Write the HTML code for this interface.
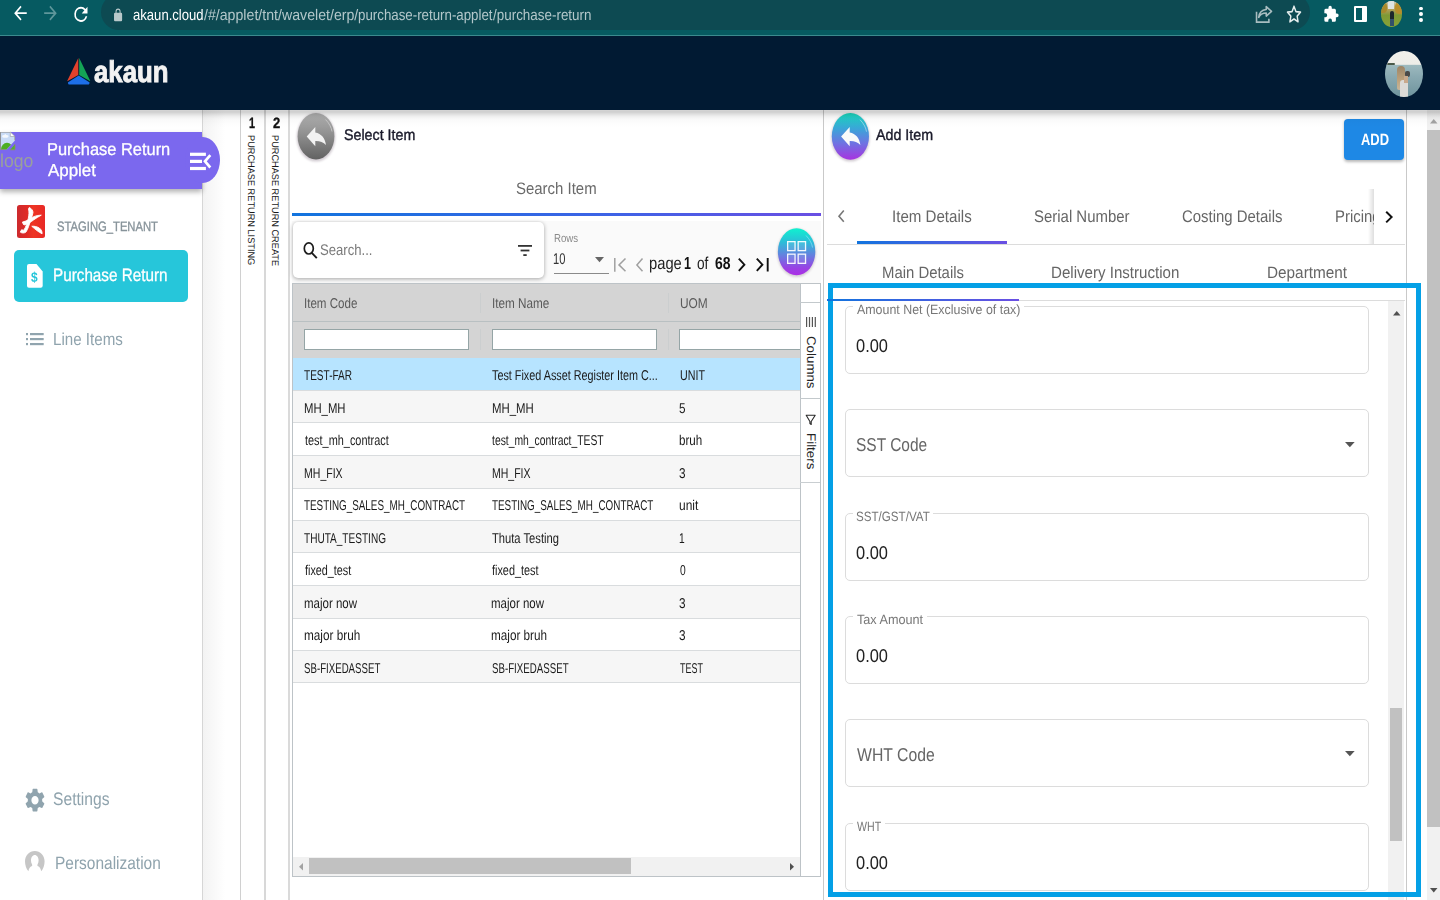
<!DOCTYPE html>
<html lang="en"><head><meta charset="utf-8"><title>Purchase Return Applet</title>
<style>
*{box-sizing:border-box;margin:0;padding:0}
html,body{width:1440px;height:900px;overflow:hidden;background:#fff;font-family:"Liberation Sans",sans-serif}
.a{position:absolute}
.t{position:absolute;white-space:pre;text-rendering:geometricPrecision;transform-origin:0 50%;font-family:"Liberation Sans",sans-serif}
.lbl{background:#fff}
svg{position:absolute;overflow:visible}
/* browser */
#chrome{left:0;top:0;width:1440px;height:36px;background:#065a61;border-bottom:1px solid #3b8a8e}
#pill{left:101px;top:-6px;width:1209px;height:35.800px;border-radius:18px;background:#0d4a52}
/* header */
#hdr{left:0;top:36px;width:1440px;height:74px;background:#011a33}
#hsh{left:0;top:110px;width:1440px;height:18px;background:linear-gradient(180deg,rgba(0,0,0,.17) 0,rgba(0,0,0,.19) 11%,rgba(0,0,0,.13) 22%,rgba(0,0,0,.075) 33%,rgba(0,0,0,.04) 44%,rgba(0,0,0,.02) 56%,rgba(0,0,0,.008) 78%,rgba(0,0,0,0) 100%)}
/* sidebar */
#side{left:0;top:110px;width:203px;height:790px;background:#fff;border-right:1px solid #d6d6d6}
#sideshadow{left:203px;top:110px;width:37px;height:790px;background:linear-gradient(90deg,#f3f3f3,#fff 60%)}
#banner{left:0;top:132px;width:201.800px;height:57px;background:#7b68ee;box-shadow:0 3px 5px rgba(0,0,0,.3)}
#bump{left:185px;top:136.700px;width:35px;height:46.600px;border-radius:50%;background:#7b68ee}
#redicon{left:16.600px;top:204.800px;width:28.400px;height:32.900px;border-radius:2.500px;background:linear-gradient(90deg,#cc2a2e,#e02a26 35%,#ee3524 58%,#e82826)}
#pbtn{left:14px;top:250px;width:174px;height:51.5px;border-radius:5px;background:#26c6da}
.vline{width:1px;top:110px;height:790px;background:#c9c9c9}
.vt{position:absolute;white-space:pre;text-rendering:geometricPrecision;font-size:9.6px;line-height:10px;color:#1a1a1a;transform-origin:0 0;letter-spacing:0}
/* left panel */
#blueline{left:292px;top:213px;width:528.5px;height:3px;background:linear-gradient(90deg,#1274de,#3d63e6 60%,#6a4fe3)}
#tool{left:292px;top:221px;width:529px;height:62px;background:#fafafa}
#sbox{left:292.800px;top:221.600px;width:251.600px;height:56.400px;border-radius:5px;background:#fff;box-shadow:0 1px 4px rgba(0,0,0,.35)}
#grid{left:292.4px;top:283px;width:528.3px;height:594px;border:1px solid #bdc3c7;background:#fff}
#ghead{left:293.4px;top:284px;width:506.600px;height:74.200px;background:#d4d4d4}
.hl{position:absolute;left:293.4px;width:506.600px;height:1px;background:#d9dcde}
.row{position:absolute;left:293.4px;width:506.600px;height:32.5px}
.fi{position:absolute;top:329px;height:20.6px;background:#fff;border:1px solid #95a5a6}
.csep{position:absolute;width:1px;background:#cbcecf}
#gside{left:800px;top:284px;width:19.700px;height:592px;background:#fff;border-left:1px solid #bdc3c7}
.ell{position:absolute;border-radius:50%}
/* right */
.box{position:absolute;left:845px;width:524.3px;height:68px;border:1px solid #dcdcdc;border-radius:5px;background:#fff}
#hi{left:828px;top:283px;width:593.3px;height:614px;border:5px solid #04a0e6}
</style></head><body>

<!-- ===== browser chrome ===== -->
<div id="chrome" class="a"></div>
<div id="pill" class="a"></div>
<svg style="left:11.250px;top:2.270px" width="18.900" height="22.350" viewBox="0 0 24 24" preserveAspectRatio="none"><path d="M20 11H7.83l5.59-5.59L12 4l-8 8 8 8 1.41-1.41L7.83 13H20v-2z" fill="#fff"/></svg>
<svg style="left:41.350px;top:2.270px" width="18.900" height="22.350" viewBox="0 0 24 24" preserveAspectRatio="none"><path d="M4 11h12.17l-5.59-5.59L12 4l8 8-8 8-1.41-1.41L16.17 13H4v-2z" fill="#5f979b"/></svg>
<svg style="left:71px;top:2.500px" width="19.800" height="22.650" viewBox="0 0 24 24" preserveAspectRatio="none"><path d="M17.65 6.35A7.95 7.95 0 0 0 12 4a8 8 0 1 0 7.73 10h-2.08A6 6 0 1 1 12 6c1.66 0 3.14.69 4.22 1.78L13 11h7V4l-2.35 2.35z" fill="#fff"/></svg>
<svg style="left:112.200px;top:7.700px" width="12.150" height="14.400" viewBox="0 0 24 24" preserveAspectRatio="none"><path d="M18 8h-1V6A5 5 0 0 0 7 6v2H6a2 2 0 0 0-2 2v10a2 2 0 0 0 2 2h12a2 2 0 0 0 2-2V10a2 2 0 0 0-2-2zM9 6a3 3 0 0 1 6 0v2H9V6z" fill="#b9c9cb"/></svg>
<!-- share -->
<svg style="left:1252.500px;top:4.400px" width="21.200" height="20.700" viewBox="0 0 24 24" preserveAspectRatio="none" fill="none" stroke="#a9bdc0" stroke-width="1.8"><path d="M4 9v12h14v-4"/><path d="M15 3l6 5.5-6 5.5v-3.5c-4 0-7 1.500-8.500 5 .5-5 3.500-8.500 8.500-9z" stroke-linejoin="round"/></svg>
<!-- star -->
<svg style="left:1284.600px;top:3.200px" width="18" height="22.500" viewBox="0 0 24 24" preserveAspectRatio="none" fill="none" stroke="#e6eeee" stroke-width="1.9" stroke-linejoin="round"><path d="M12 3.500l2.600 5.600 6.100.700-4.500 4.200 1.200 6-5.400-3-5.400 3 1.200-6-4.500-4.200 6.100-.700z"/></svg>
<!-- puzzle -->
<svg style="left:1322.800px;top:5.200px" width="16.300" height="18.300" viewBox="0 0 24 24" preserveAspectRatio="none"><path d="M20.500 11H19V7a2 2 0 0 0-2-2h-4V3.500a2.500 2.500 0 0 0-5 0V5H4a2 2 0 0 0-2 2v3.800h1.500a2.700 2.700 0 0 1 0 5.400H2V20a2 2 0 0 0 2 2h3.800v-1.500a2.700 2.700 0 0 1 5.400 0V22H17a2 2 0 0 0 2-2v-4h1.500a2.500 2.500 0 0 0 0-5z" fill="#fff"/></svg>
<!-- side panel -->
<div class="a" style="left:1353.7px;top:5.500px;width:13.8px;height:16.5px;border:2.2px solid #fff;border-right-width:5.500px;border-radius:1px"></div>
<!-- avatar small -->
<div class="ell" style="left:1380.8px;top:1px;width:21px;height:26px;background:linear-gradient(180deg,#c9c9b8 0%,#b9a25a 30%,#9a9a48 44%,#7f9a34 55%,#86a238 100%);overflow:hidden">
<div class="a" style="left:-2px;top:1px;width:8.500px;height:11px;background:#a88a2c;border-radius:40%"></div>
<div class="a" style="left:14px;top:1px;width:9px;height:12px;background:#b88e2a;border-radius:40%"></div>
<div class="a" style="left:7px;top:0;width:6.500px;height:8px;background:#dfe3e2"></div>
<div class="a" style="left:9px;top:9.500px;width:4.600px;height:8.500px;background:#1d262b;border-radius:2px 2px 0 0"></div>
<div class="a" style="left:9.600px;top:18px;width:3.400px;height:7px;background:#33506a"></div>
</div>
<div class="ell" style="left:1419px;top:6.5px;width:3.6px;height:3.8px;background:#fff"></div>
<div class="ell" style="left:1419px;top:12.2px;width:3.6px;height:3.8px;background:#fff"></div>
<div class="ell" style="left:1419px;top:17.9px;width:3.6px;height:3.8px;background:#fff"></div>

<!-- ===== sidebar ===== -->
<div id="side" class="a"></div>
<div id="sideshadow" class="a"></div>
<div class="vline a" style="left:240px;background:#d0d0d0"></div>
<div class="vline a" style="left:264px;width:2px;background:#d8d8d8"></div>
<div class="vline a" style="left:288px;width:2px;background:#dadada"></div>
<div class="vline a" style="left:823px"></div>
<div class="vline a" style="left:1406px"></div>
<div id="banner" class="a"></div>
<div id="bump" class="a"></div>
<!-- broken img icon -->
<svg style="left:0;top:132.200px" width="15" height="17.800" viewBox="0 0 15 17.800"><defs><clipPath id="bk"><path d="M0 0h10.300L15 4.500v4L6.200 17.800H0z"/></clipPath></defs><g clip-path="url(#bk)"><rect width="15" height="17.800" fill="#c8dbf6"/><ellipse cx="5.300" cy="4.300" rx="3.200" ry="1.500" fill="#f4f8fd"/><path d="M3.600 3.600l1.700-1.700 1.700 1.700z" fill="#f4f8fd"/><ellipse cx="7" cy="17.500" rx="6" ry="6.700" fill="#4cae22"/><path d="M0 0v17.800" stroke="#8a8a8a" stroke-width="1.800"/><path d="M0 17.500h7" stroke="#8a8a8a" stroke-width="1"/><path d="M0 .3h10" stroke="#9a9a9a" stroke-width=".8"/></g><path d="M10.300 0v4.500H15z" fill="#fdfdfd" stroke="#9a9a9a" stroke-width=".6"/><path d="M10.200 17.800L15 12.200v5.600z" fill="#55b030"/><path d="M15 12.200v5.600h-4.800" fill="none" stroke="#8f8f6a" stroke-width=".8"/><path d="M14.700 4.500v4" stroke="#9a9a80" stroke-width=".7"/></svg>
<!-- collapse icon -->
<svg style="left:188px;top:150px" width="26" height="22" viewBox="188 150 26 22"><rect x="190" y="152.700" width="15.900" height="3.200" fill="#fff"/><rect x="190" y="159.800" width="12" height="3.200" fill="#fff"/><rect x="190" y="166.900" width="15.900" height="3.200" fill="#fff"/><path d="M210.300 155.200l-5.300 6.150 5.300 6.150" fill="none" stroke="#fff" stroke-width="2.700"/></svg>
<div id="redicon" class="a"></div>
<svg style="left:16.600px;top:204.800px" width="28.400" height="32.900" viewBox="0 0 28.400 32.900" fill="#fff" stroke="#fff" stroke-width=".9" stroke-linejoin="round"><path d="M12.300 2.500C14.500 3.500 16 5.500 16 7.500 15.600 10 14.800 12 14 14 12.500 19 11 24 9 27 7.500 28.300 5 28.300 3.400 27.200 3.600 26 4.200 25 5 24.600 5.600 25.300 6.200 25.500 6.800 25.200 9 22 10.500 17 11.300 13.500 12 10 12.300 6.500 11.500 4z"/><path d="M5.400 17.100C8 16.500 10 15.600 12 14.500 15 12.500 18 10.300 24.300 10.200 22 11.500 19 13 16.500 15 14 17 11 18.800 7 20 6.300 19.300 5.600 18 5.400 17.100z"/><path d="M14.800 21.300C17 21 20 21.500 22.500 23.200 24.500 24.800 25.300 27 25.100 28.800 23.500 28 22 27 20.500 26 18.500 24.500 16.500 22.800 14.800 21.300z"/></svg>
<div id="pbtn" class="a"></div>
<!-- doc $ icon -->
<svg style="left:27px;top:263.7px" width="15.7" height="23.8" viewBox="0 0 15.7 23.8"><path d="M2 0h7.500l6.200 7.500V21.800a2 2 0 0 1-2 2H2a2 2 0 0 1-2-2V2a2 2 0 0 1 2-2z" fill="#fff"/></svg>
<div class="t" style="left:31.100px;top:268.5px;font-size:14px;line-height:16px;font-weight:700;color:#26c6da;transform:scaleX(.85)">$</div>
<!-- list icon -->
<svg style="left:26px;top:332.5px" width="17.7" height="12.2" viewBox="0 0 17.7 12.2" fill="#90a4ae"><rect x="0" y="0" width="2" height="2.200"/><rect x="0" y="5" width="2" height="2.200"/><rect x="0" y="10" width="2" height="2.200"/><rect x="4" y="0" width="13.7" height="2.200"/><rect x="4" y="5" width="13.7" height="2.200"/><rect x="4" y="10" width="13.7" height="2.200"/></svg>
<!-- gear -->
<svg style="left:22.700px;top:785.700px" width="24" height="28.400" viewBox="0 0 24 24" preserveAspectRatio="none"><path d="M19.140 12.940c.040-.300.060-.610.060-.940 0-.320-.020-.640-.070-.940l2.030-1.580a.490.490 0 0 0 .12-.610l-1.920-3.320a.488.488 0 0 0-.59-.220l-2.390.960c-.500-.380-1.030-.700-1.620-.940l-.360-2.540a.484.484 0 0 0-.480-.410h-3.840c-.240 0-.430.170-.470.410l-.360 2.540c-.590.240-1.130.570-1.620.940l-2.390-.960c-.220-.080-.470 0-.590.220L2.740 8.870c-.120.210-.080.470.12.610l2.030 1.580c-.050.300-.090.630-.090.940s.020.640.070.940l-2.030 1.580a.490.490 0 0 0-.12.610l1.920 3.320c.120.220.370.290.590.220l2.390-.960c.500.380 1.030.700 1.620.940l.360 2.540c.050.240.240.410.480.410h3.840c.240 0 .440-.170.470-.410l.360-2.540c.590-.240 1.130-.560 1.620-.940l2.390.960c.220.080.470 0 .590-.220l1.920-3.320c.120-.220.070-.470-.120-.610l-2.010-1.580zM12 15.600c-1.980 0-3.600-1.620-3.600-3.600s1.620-3.600 3.600-3.600 3.600 1.620 3.600 3.600-1.620 3.600-3.600 3.600z" fill="#90a4ae"/></svg>
<!-- person -->
<svg style="left:24.800px;top:850.800px" width="19.600" height="20.500" viewBox="0 0 19.600 20.500"><path d="M9.800 0C15.200 0 19.600 4.600 19.600 10.300 19.600 14.200 18.400 17.700 16.200 20.300 15.800 17.500 14.800 15.800 12.600 15 12.200 14.500 12.300 13.800 12.600 13.200 13.300 12 13.600 10.800 13.600 9.500 13.600 6.300 11.900 4 9.800 4 7.700 4 6 6.300 6 9.500 6 10.800 6.300 12 7 13.200 7.300 13.800 7.400 14.500 7 15 4.800 15.800 3.800 17.500 3.400 20.300 1.200 17.700 0 14.200 0 10.300 0 4.600 4.400 0 9.800 0z" fill="#c6c6c6"/></svg>

<!-- vertical strip labels -->
<div class="vt" style="left:255.200px;top:135.400px;transform:rotate(90deg) scaleX(.958)" id="v1">PURCHASE RETURN LISTING</div>
<div class="vt" style="left:279.200px;top:135.400px;transform:rotate(90deg) scaleX(.958)" id="v2">PURCHASE RETURN CREATE</div>

<!-- ===== left panel ===== -->
<svg style="left:290px;top:108px" width="52" height="60" viewBox="290 108 52 60"><defs><linearGradient id="gg" x1="0" y1="0" x2="0" y2="1"><stop offset="0" stop-color="#b2b2b2"/><stop offset=".45" stop-color="#909090"/><stop offset="1" stop-color="#626262"/></linearGradient><filter id="bl"><feGaussianBlur stdDeviation="1.300"/></filter></defs>
<ellipse cx="316" cy="137.300" rx="19.300" ry="24.200" fill="#8a7a8a" opacity=".38" filter="url(#bl)"/>
<ellipse cx="316" cy="136.200" rx="18.400" ry="23.200" fill="url(#gg)"/>
<path d="M325.500 119.500c4 4 6 8.500 6.500 12" fill="none" stroke="#d9d9d9" stroke-width=".8" opacity=".8"/>
<path d="M315.300 127L306.700 136.400l8.600 9.900v-5.200c4.600-.1 8.100 1 10.700 4-1-7-4.500-11.500-10.700-12.600z" fill="#f2f2f2"/></svg>
<div id="blueline" class="a"></div>
<div id="tool" class="a"></div>
<div id="sbox" class="a"></div>
<!-- search icon -->
<svg style="left:302px;top:240px" width="18" height="20" viewBox="302 240 18 20" fill="none" stroke="#1c1c1c" stroke-width="1.700"><ellipse cx="308.800" cy="248.400" rx="4.500" ry="5.600"/><path d="M311.800 252.800l5 5.400" stroke-width="1.900"/></svg>
<!-- filter icon -->
<svg style="left:517.600px;top:245px" width="14" height="12" viewBox="0 0 14 12" fill="#333"><rect x="0" y="0" width="14" height="1.800"/><rect x="2.600" y="4.600" width="8.800" height="1.800"/><rect x="5.300" y="9.200" width="3.400" height="1.800"/></svg>
<!-- rows select -->
<div class="a" style="left:554px;top:273.300px;width:55px;height:1px;background:#8a8a8a"></div>
<svg style="left:595.400px;top:257px" width="9" height="5.200" viewBox="0 0 9 5.200"><path d="M0 0h9L4.500 5.200z" fill="#666"/></svg>
<!-- pager icons -->
<svg style="left:613.500px;top:257.600px" width="12.200" height="13.800" viewBox="0 0 12.200 13.800" fill="none" stroke="#a0a0a0" stroke-width="1.500"><path d="M.8 0v13.800M11.500.5L5 6.900l6.500 6.400"/></svg>
<svg style="left:636.300px;top:257.600px" width="7" height="13.800" viewBox="0 0 7 13.800" fill="none" stroke="#a0a0a0" stroke-width="1.500"><path d="M6.500.5L.9 6.900l5.600 6.400"/></svg>
<svg style="left:738.300px;top:258px" width="7.500" height="13.400" viewBox="0 0 7.500 13.400" fill="none" stroke="#111" stroke-width="1.900"><path d="M.8.600l5.600 6.100-5.600 6.100"/></svg>
<svg style="left:755.900px;top:258px" width="12.700" height="13.400" viewBox="0 0 12.700 13.400" fill="none" stroke="#111" stroke-width="1.900"><path d="M.8.600l5.600 6.100-5.600 6.100M11.700 0v13.400"/></svg>
<!-- gradient round button -->
<svg style="left:771px;top:222px" width="52" height="60" viewBox="771 222 52 60"><defs><linearGradient id="gq" x1="0" y1="0" x2="0" y2="1"><stop offset="0" stop-color="#0ff2cf"/><stop offset=".3" stop-color="#2cbcd8"/><stop offset=".6" stop-color="#6a7ae0"/><stop offset=".85" stop-color="#9a40e4"/><stop offset="1" stop-color="#ac2ee6"/></linearGradient></defs>
<ellipse cx="796.600" cy="252.800" rx="19.300" ry="24.200" fill="#8a7a8a" opacity=".35" filter="url(#bl)"/>
<ellipse cx="796.600" cy="251.800" rx="18.700" ry="23.500" fill="url(#gq)"/>
<path d="M806 235.500c4 4 6 8.500 6.500 12" fill="none" stroke="#aef" stroke-width=".9" opacity=".6"/>
<g fill="rgba(255,255,255,.10)" stroke="#fff" stroke-opacity=".93" stroke-width="1.300"><rect x="787.650" y="241.650" width="7.400" height="9"/><rect x="798.150" y="241.650" width="7.400" height="9"/><rect x="787.650" y="254.150" width="7.400" height="9.200"/><rect x="798.150" y="254.150" width="7.400" height="9.200"/></g></svg>
<!-- grid -->
<div id="grid" class="a"></div>
<div id="ghead" class="a"></div>
<div class="hl" style="top:321px;background:#b9c0c2"></div>
<div class="csep" style="left:480.400px;top:293px;height:20px"></div>
<div class="csep" style="left:667.600px;top:293px;height:20px"></div>
<div class="csep" style="left:480.400px;top:329px;height:21px"></div>
<div class="csep" style="left:667.600px;top:329px;height:21px"></div>
<div class="fi" style="left:304px;width:165.400px"></div>
<div class="fi" style="left:491.600px;width:165.400px"></div>
<div class="fi" style="left:679px;width:121px;border-right:0"></div>
<div class="row" style="top:358.2px;background:#b7e4ff"></div>
<div class="row" style="top:390.7px;background:#f6f6f6"></div>
<div class="row" style="top:423.2px;background:#ffffff"></div>
<div class="row" style="top:455.7px;background:#f6f6f6"></div>
<div class="row" style="top:488.2px;background:#ffffff"></div>
<div class="row" style="top:520.7px;background:#f6f6f6"></div>
<div class="row" style="top:553.2px;background:#ffffff"></div>
<div class="row" style="top:585.7px;background:#f6f6f6"></div>
<div class="row" style="top:618.2px;background:#ffffff"></div>
<div class="row" style="top:650.7px;background:#f6f6f6"></div>
<div class="hl" style="top:390px"></div>
<div class="hl" style="top:422px"></div>
<div class="hl" style="top:455px"></div>
<div class="hl" style="top:488px"></div>
<div class="hl" style="top:520px"></div>
<div class="hl" style="top:552px"></div>
<div class="hl" style="top:585px"></div>
<div class="hl" style="top:618px"></div>
<div class="hl" style="top:650px"></div>
<div class="hl" style="top:682px"></div>
<div id="gside" class="a"></div>
<div class="a" style="left:800px;top:302px;width:20px;height:1px;background:#c3c9cc"></div>
<div class="a" style="left:800px;top:398px;width:20px;height:1px;background:#c3c9cc"></div>
<div class="a" style="left:800px;top:481.500px;width:20px;height:1px;background:#c9ced1"></div>
<svg style="left:805.600px;top:317px" width="10" height="10" viewBox="0 0 10 10" fill="#555"><rect x="0" width="1.200" height="10"/><rect x="2.900" width="1.200" height="10"/><rect x="5.800" width="1.200" height="10"/><rect x="8.700" width="1.200" height="10"/></svg>
<div class="vt" style="left:816.500px;top:336px;font-size:12.500px;line-height:12px;color:#222;transform:rotate(90deg) scaleX(1.065)" id="v3">Columns</div>
<svg style="left:804px;top:413px" width="14" height="14" viewBox="804 413 14 14" fill="none" stroke="#2a2a2a" stroke-width="1.100" stroke-linejoin="round"><path d="M806.200 415.200h9l-4 6.300v3l-1.300-.9v-2.100z"/></svg>
<div class="vt" style="left:816.500px;top:433.300px;font-size:12.500px;line-height:12px;color:#222;transform:rotate(90deg) scaleX(1.070)" id="v4">Filters</div>
<!-- h scrollbar -->
<div class="a" style="left:293.400px;top:856.700px;width:506.600px;height:19.300px;background:#f1f1f1"></div>
<div class="a" style="left:308.700px;top:858px;width:322.600px;height:15.600px;background:#c1c1c1"></div>
<svg style="left:298.500px;top:862.500px" width="4" height="7.500" viewBox="0 0 4 7.500"><path d="M4 0v7.500L0 3.750z" fill="#a3a3a3"/></svg>
<svg style="left:790px;top:862.500px" width="4" height="7.500" viewBox="0 0 4 7.500"><path d="M0 0v7.500l4-3.750z" fill="#505050"/></svg>

<!-- ===== right panel ===== -->
<svg style="left:825px;top:108px" width="52" height="60" viewBox="825 108 52 60"><defs><linearGradient id="gp" x1="0" y1="0" x2="0" y2="1"><stop offset="0" stop-color="#19dcc0"/><stop offset=".33" stop-color="#3aa6d8"/><stop offset=".65" stop-color="#6f72e2"/><stop offset="1" stop-color="#a833e0"/></linearGradient></defs>
<ellipse cx="850.400" cy="137.400" rx="19.300" ry="24.200" fill="#8a7a8a" opacity=".38" filter="url(#bl)"/>
<ellipse cx="850.400" cy="136.400" rx="18.600" ry="23.400" fill="url(#gp)"/>
<path d="M860 119.700c4 4 6 8.500 6.500 12" fill="none" stroke="#fff" stroke-width=".8" opacity=".55"/>
<path d="M849.700 127l-8.600 9.400 8.600 9.900v-5.200c4.600-.1 8.100 1 10.700 4-1-7-4.500-11.500-10.700-12.600z" fill="#fafafa"/></svg>
<div class="a" style="left:1343.900px;top:118.500px;width:60px;height:41.300px;border-radius:4px;background:#1e88e5;box-shadow:0 1.500px 3px rgba(0,0,0,.28)"></div>
<!-- tabs -->
<div class="a" style="left:827px;top:243.500px;width:578px;height:1px;background:#dcdcdc"></div>
<div class="a" style="left:856.600px;top:241px;width:150px;height:3px;background:linear-gradient(90deg,#1274de,#6a4fe3)"></div>
<svg style="left:838.200px;top:210px" width="6.500" height="12.400" viewBox="0 0 6.500 12.400" fill="none" stroke="#777" stroke-width="1.600"><path d="M5.800.600L1 6.200l4.800 5.600"/></svg>
<div class="a" style="left:828px;top:299.500px;width:577px;height:1px;background:#dcdcdc"></div>
<div class="a" style="left:828px;top:298.800px;width:191px;height:2px;background:linear-gradient(90deg,#1274de,#6a4fe3)"></div>
<div class="box" style="top:306.0px"></div>
<div class="box" style="top:409.3px"></div>
<div class="box" style="top:512.6px"></div>
<div class="box" style="top:615.9px"></div>
<div class="box" style="top:719.2px"></div>
<div class="box" style="top:822.5px"></div>
<div class="a" style="left:852.9px;top:304.0px;width:171.1px;height:4px;background:#fff"></div>
<div class="a" style="left:852.6px;top:510.7px;width:80.4px;height:4px;background:#fff"></div>
<div class="a" style="left:852.6px;top:614.0px;width:74.7px;height:4px;background:#fff"></div>
<div class="a" style="left:852.6px;top:820.7px;width:32.4px;height:4px;background:#fff"></div>
<div class="t " style="left:0.26px;top:152px;font-size:18.7px;line-height:18.7px;color:#9aa09c;font-weight:400;transform:scaleX(0.941);">logo</div>
<div class="t " style="left:46.75px;top:141px;font-size:17.25px;line-height:17.25px;color:#ffffff;font-weight:400;transform:scaleX(0.952);-webkit-text-stroke:0.3px #ffffff;">Purchase Return</div>
<div class="t " style="left:47.70px;top:162px;font-size:17.39px;line-height:17.39px;color:#ffffff;font-weight:400;transform:scaleX(0.974);-webkit-text-stroke:0.3px #ffffff;">Applet</div>
<div class="t " style="left:57.47px;top:220px;font-size:13.62px;line-height:13.62px;color:#87939a;font-weight:400;transform:scaleX(0.826);-webkit-text-stroke:0.35px #87939a;">STAGING_TENANT</div>
<div class="t " style="left:53.24px;top:267px;font-size:17.83px;line-height:17.83px;color:#ffffff;font-weight:400;transform:scaleX(0.856);-webkit-text-stroke:0.3px #ffffff;">Purchase Return</div>
<div class="t " style="left:53.23px;top:331px;font-size:17.39px;line-height:17.39px;color:#8fa3ad;font-weight:400;transform:scaleX(0.871);">Line Items</div>
<div class="t " style="left:53.24px;top:790px;font-size:18.12px;line-height:18.12px;color:#8fa3ad;font-weight:400;transform:scaleX(0.864);">Settings</div>
<div class="t " style="left:55.03px;top:855px;font-size:17.83px;line-height:17.83px;color:#8fa3ad;font-weight:400;transform:scaleX(0.868);">Personalization</div>
<div class="t " style="left:248.86px;top:117px;font-size:14.93px;line-height:14.93px;color:#111;font-weight:700;transform:scaleX(0.720);-webkit-text-stroke:0.3px #111;">1</div>
<div class="t " style="left:273.40px;top:117px;font-size:14.93px;line-height:14.93px;color:#111;font-weight:700;transform:scaleX(0.875);-webkit-text-stroke:0.3px #111;">2</div>
<div class="t " style="left:343.67px;top:128px;font-size:15.36px;line-height:15.36px;color:#1a1a2a;font-weight:400;transform:scaleX(0.928);-webkit-text-stroke:0.4px #1a1a2a;">Select Item</div>
<div class="t " style="left:516.30px;top:181px;font-size:16.67px;line-height:16.67px;color:#6a6a6a;font-weight:400;transform:scaleX(0.898);">Search Item</div>
<div class="t " style="left:320.25px;top:243px;font-size:15.36px;line-height:15.36px;color:#7a7a7a;font-weight:400;transform:scaleX(0.853);">Search...</div>
<div class="t " style="left:554.06px;top:234px;font-size:11.59px;line-height:11.59px;color:#8a8a8a;font-weight:400;transform:scaleX(0.836);">Rows</div>
<div class="t " style="left:553.17px;top:252px;font-size:15.51px;line-height:15.51px;color:#333;font-weight:400;transform:scaleX(0.720);">10</div>
<div class="t " style="left:649.15px;top:255px;font-size:17.39px;line-height:17.39px;color:#222;font-weight:400;transform:scaleX(0.849);">page</div>
<div class="t " style="left:684.10px;top:255px;font-size:17.39px;line-height:17.39px;color:#111;font-weight:700;transform:scaleX(0.720);">1</div>
<div class="t " style="left:696.61px;top:255px;font-size:17.39px;line-height:17.39px;color:#222;font-weight:400;transform:scaleX(0.786);">of</div>
<div class="t " style="left:715.40px;top:255px;font-size:17.39px;line-height:17.39px;color:#111;font-weight:700;transform:scaleX(0.805);">68</div>
<div class="t " style="left:304.18px;top:297px;font-size:14.2px;line-height:14.2px;color:#5a5a5a;font-weight:400;transform:scaleX(0.816);">Item Code</div>
<div class="t " style="left:491.77px;top:297px;font-size:14.2px;line-height:14.2px;color:#5a5a5a;font-weight:400;transform:scaleX(0.826);">Item Name</div>
<div class="t " style="left:679.56px;top:297px;font-size:14.2px;line-height:14.2px;color:#5a5a5a;font-weight:400;transform:scaleX(0.839);">UOM</div>
<div class="t " style="left:303.90px;top:369px;font-size:14.2px;line-height:14.2px;color:#1a1a1a;font-weight:400;transform:scaleX(0.709);">TEST-FAR</div>
<div class="t " style="left:491.50px;top:369px;font-size:14.2px;line-height:14.2px;color:#1a1a1a;font-weight:400;transform:scaleX(0.762);">Test Fixed Asset Register Item C...</div>
<div class="t " style="left:679.55px;top:369px;font-size:14.2px;line-height:14.2px;color:#1a1a1a;font-weight:400;transform:scaleX(0.753);">UNIT</div>
<div class="t " style="left:303.90px;top:402px;font-size:14.2px;line-height:14.2px;color:#1a1a1a;font-weight:400;transform:scaleX(0.798);">MH_MH</div>
<div class="t " style="left:491.50px;top:402px;font-size:14.2px;line-height:14.2px;color:#1a1a1a;font-weight:400;transform:scaleX(0.802);">MH_MH</div>
<div class="t " style="left:679.47px;top:402px;font-size:14.2px;line-height:14.2px;color:#1a1a1a;font-weight:400;transform:scaleX(0.829);">5</div>
<div class="t " style="left:304.70px;top:434px;font-size:14.2px;line-height:14.2px;color:#1a1a1a;font-weight:400;transform:scaleX(0.769);">test_mh_contract</div>
<div class="t " style="left:492.30px;top:434px;font-size:14.2px;line-height:14.2px;color:#1a1a1a;font-weight:400;transform:scaleX(0.730);">test_mh_contract_TEST</div>
<div class="t " style="left:679.48px;top:434px;font-size:14.2px;line-height:14.2px;color:#1a1a1a;font-weight:400;transform:scaleX(0.819);">bruh</div>
<div class="t " style="left:303.96px;top:467px;font-size:14.2px;line-height:14.2px;color:#1a1a1a;font-weight:400;transform:scaleX(0.743);">MH_FIX</div>
<div class="t " style="left:491.56px;top:467px;font-size:14.2px;line-height:14.2px;color:#1a1a1a;font-weight:400;transform:scaleX(0.741);">MH_FIX</div>
<div class="t " style="left:679.47px;top:467px;font-size:14.2px;line-height:14.2px;color:#1a1a1a;font-weight:400;transform:scaleX(0.829);">3</div>
<div class="t " style="left:303.90px;top:499px;font-size:14.2px;line-height:14.2px;color:#1a1a1a;font-weight:400;transform:scaleX(0.695);">TESTING_SALES_MH_CONTRACT</div>
<div class="t " style="left:491.50px;top:499px;font-size:14.2px;line-height:14.2px;color:#1a1a1a;font-weight:400;transform:scaleX(0.696);">TESTING_SALES_MH_CONTRACT</div>
<div class="t " style="left:679.45px;top:499px;font-size:14.2px;line-height:14.2px;color:#1a1a1a;font-weight:400;transform:scaleX(0.845);">unit</div>
<div class="t " style="left:303.90px;top:532px;font-size:14.2px;line-height:14.2px;color:#1a1a1a;font-weight:400;transform:scaleX(0.709);">THUTA_TESTING</div>
<div class="t " style="left:491.50px;top:532px;font-size:14.2px;line-height:14.2px;color:#1a1a1a;font-weight:400;transform:scaleX(0.788);">Thuta Testing</div>
<div class="t " style="left:678.96px;top:532px;font-size:14.2px;line-height:14.2px;color:#1a1a1a;font-weight:400;transform:scaleX(0.720);">1</div>
<div class="t " style="left:304.70px;top:564px;font-size:14.2px;line-height:14.2px;color:#1a1a1a;font-weight:400;transform:scaleX(0.762);">fixed_test</div>
<div class="t " style="left:492.30px;top:564px;font-size:14.2px;line-height:14.2px;color:#1a1a1a;font-weight:400;transform:scaleX(0.766);">fixed_test</div>
<div class="t " style="left:680.30px;top:564px;font-size:14.2px;line-height:14.2px;color:#1a1a1a;font-weight:400;transform:scaleX(0.725);">0</div>
<div class="t " style="left:303.89px;top:597px;font-size:14.2px;line-height:14.2px;color:#1a1a1a;font-weight:400;transform:scaleX(0.811);">major now</div>
<div class="t " style="left:491.49px;top:597px;font-size:14.2px;line-height:14.2px;color:#1a1a1a;font-weight:400;transform:scaleX(0.809);">major now</div>
<div class="t " style="left:679.47px;top:597px;font-size:14.2px;line-height:14.2px;color:#1a1a1a;font-weight:400;transform:scaleX(0.829);">3</div>
<div class="t " style="left:303.87px;top:629px;font-size:14.2px;line-height:14.2px;color:#1a1a1a;font-weight:400;transform:scaleX(0.829);">major bruh</div>
<div class="t " style="left:491.47px;top:629px;font-size:14.2px;line-height:14.2px;color:#1a1a1a;font-weight:400;transform:scaleX(0.826);">major bruh</div>
<div class="t " style="left:679.47px;top:629px;font-size:14.2px;line-height:14.2px;color:#1a1a1a;font-weight:400;transform:scaleX(0.829);">3</div>
<div class="t " style="left:304.02px;top:662px;font-size:14.2px;line-height:14.2px;color:#1a1a1a;font-weight:400;transform:scaleX(0.682);">SB-FIXEDASSET</div>
<div class="t " style="left:491.62px;top:662px;font-size:14.2px;line-height:14.2px;color:#1a1a1a;font-weight:400;transform:scaleX(0.684);">SB-FIXEDASSET</div>
<div class="t " style="left:679.60px;top:662px;font-size:14.2px;line-height:14.2px;color:#1a1a1a;font-weight:400;transform:scaleX(0.633);">TEST</div>
<div class="t " style="left:876.10px;top:128px;font-size:15.36px;line-height:15.36px;color:#1a1a2a;font-weight:400;transform:scaleX(0.928);-webkit-text-stroke:0.4px #1a1a2a;">Add Item</div>
<div class="t " style="left:1360.50px;top:132px;font-size:16.52px;line-height:16.52px;color:#ffffff;font-weight:700;transform:scaleX(0.783);">ADD</div>
<div class="t " style="left:891.80px;top:209px;font-size:16.81px;line-height:16.81px;color:#666;font-weight:400;transform:scaleX(0.899);">Item Details</div>
<div class="t " style="left:1033.91px;top:209px;font-size:16.81px;line-height:16.81px;color:#666;font-weight:400;transform:scaleX(0.890);">Serial Number</div>
<div class="t " style="left:1181.51px;top:209px;font-size:16.81px;line-height:16.81px;color:#666;font-weight:400;transform:scaleX(0.889);">Costing Details</div>
<div class="t " style="left:1334.71px;top:209px;font-size:16.81px;line-height:16.81px;color:#666;font-weight:400;transform:scaleX(0.886);">Pricing</div>
<div class="t " style="left:882.00px;top:265px;font-size:16.52px;line-height:16.52px;color:#666;font-weight:400;transform:scaleX(0.902);">Main Details</div>
<div class="t " style="left:1051.09px;top:265px;font-size:16.52px;line-height:16.52px;color:#666;font-weight:400;transform:scaleX(0.914);">Delivery Instruction</div>
<div class="t " style="left:1267.47px;top:265px;font-size:16.52px;line-height:16.52px;color:#666;font-weight:400;transform:scaleX(0.928);">Department</div>
<div class="t lbl" style="left:857.30px;top:303px;font-size:13.48px;line-height:13.48px;color:#777;font-weight:400;transform:scaleX(0.921);">Amount Net (Exclusive of tax)</div>
<div class="t lbl" style="left:856.14px;top:510px;font-size:13.48px;line-height:13.48px;color:#777;font-weight:400;transform:scaleX(0.862);">SST/GST/VAT</div>
<div class="t lbl" style="left:857.00px;top:613px;font-size:13.48px;line-height:13.48px;color:#777;font-weight:400;transform:scaleX(0.939);">Tax Amount</div>
<div class="t lbl" style="left:857.00px;top:820px;font-size:13.48px;line-height:13.48px;color:#777;font-weight:400;transform:scaleX(0.787);">WHT</div>
<div class="t " style="left:856.11px;top:337px;font-size:18.55px;line-height:18.55px;color:#222;font-weight:400;transform:scaleX(0.886);">0.00</div>
<div class="t " style="left:856.11px;top:544px;font-size:18.55px;line-height:18.55px;color:#222;font-weight:400;transform:scaleX(0.886);">0.00</div>
<div class="t " style="left:856.11px;top:647px;font-size:18.55px;line-height:18.55px;color:#222;font-weight:400;transform:scaleX(0.886);">0.00</div>
<div class="t " style="left:856.11px;top:854px;font-size:18.55px;line-height:18.55px;color:#222;font-weight:400;transform:scaleX(0.886);">0.00</div>
<div class="t " style="left:856.16px;top:436px;font-size:18.55px;line-height:18.55px;color:#666;font-weight:400;transform:scaleX(0.836);">SST Code</div>
<div class="t " style="left:857.00px;top:746px;font-size:18.55px;line-height:18.55px;color:#666;font-weight:400;transform:scaleX(0.851);">WHT Code</div>
<svg style="left:1345px;top:441.500px" width="9.700" height="5.300" viewBox="0 0 9.700 5.300"><path d="M0 0h9.700L4.850 5.300z" fill="#555"/></svg>
<svg style="left:1345px;top:751.400px" width="9.700" height="5.300" viewBox="0 0 9.700 5.300"><path d="M0 0h9.700L4.850 5.300z" fill="#555"/></svg>
<div class="a" style="left:1367.700px;top:188.500px;width:6px;height:55px;background:linear-gradient(90deg,rgba(0,0,0,0),rgba(0,0,0,.13))"></div>
<div class="a" style="left:1373.700px;top:188.500px;width:31px;height:55px;background:#fff"></div>
<div class="a" style="left:1373.700px;top:243.500px;width:31px;height:1px;background:#dcdcdc"></div>
<svg style="left:1385px;top:210.700px" width="8.300" height="12.200" viewBox="0 0 8.300 12.200" fill="none" stroke="#111" stroke-width="2"><path d="M1.200.800l5.400 5.300-5.400 5.300"/></svg>

<!-- scrollbars -->
<div class="a" style="left:1388.300px;top:300.500px;width:15.400px;height:600px;background:#f1f1f1"></div>
<div class="a" style="left:1390px;top:708px;width:12px;height:133px;background:#c1c1c1"></div>
<svg style="left:1392.500px;top:310.500px" width="7.500" height="4.500" viewBox="0 0 7.500 4.500"><path d="M0 4.500h7.500L3.750 0z" fill="#505050"/></svg>
<div class="a" style="left:1426.500px;top:110px;width:13.500px;height:790px;background:#f1f1f1"></div>
<div class="a" style="left:1427px;top:130px;width:13px;height:697px;background:#c1c1c1"></div>
<svg style="left:1429.500px;top:119px" width="7.500" height="4.500" viewBox="0 0 7.500 4.500"><path d="M0 4.500h7.500L3.750 0z" fill="#a3a3a3"/></svg>
<svg style="left:1429.500px;top:888px" width="7.500" height="4.500" viewBox="0 0 7.500 4.500"><path d="M0 0h7.500L3.750 4.500z" fill="#505050"/></svg>

<!-- highlight rect -->
<div id="hi" class="a"></div>
<div class="a" style="left:827px;top:298.800px;width:6.500px;height:2px;background:#1274de"></div>

<!-- ===== app header (on top for shadow) ===== -->
<div id="hdr" class="a"></div>
<div id="hsh" class="a"></div>
<svg style="left:66.700px;top:58px" width="23.500" height="26.500" viewBox="0 0 23.500 26.500"><path d="M11.300 0L.4 22.600c-.2.400 0 .7.300.5l10.600-6.200z" fill="#e2412c"/><path d="M12.200 0l10.900 22.600c.2.400 0 .7-.3.500L12.200 16.900z" fill="#14a456"/><path d="M11.750 17.600L1.200 24.200c-.4.300-.2 1.400.3 2 .2.200.4.300.8.300h18.900c.4 0 .6-.1.800-.3.500-.6.700-1.700.3-2z" fill="#1d6fe8"/></svg>
<div class="ell" style="left:1385px;top:50.800px;width:38px;height:46.700px;background:linear-gradient(180deg,#f1f0eb 0%,#eeede8 29%,#9db9be 31%,#8aaab2 55%,#6f949d 100%);overflow:hidden">
<div class="a" style="left:2px;top:12.500px;width:8px;height:2px;background:#4a5a4a;border-radius:1px"></div>
<div class="a" style="left:12px;top:15px;width:8px;height:24px;border-radius:4px 4px 2px 2px;background:linear-gradient(180deg,#9c8466,#bda27c 60%,#c8b79c)"></div>
<div class="a" style="left:14.500px;top:29px;width:8.500px;height:18px;border-radius:3px 3px 0 0;background:#dcdad6"></div>
<div class="a" style="left:19.500px;top:20px;width:5px;height:6px;border-radius:2px;background:#4a4a48"></div>
<div class="a" style="left:19px;top:25px;width:3.500px;height:7px;background:#c9a98c"></div>
</div>
<div class="t top" style="left:132.85px;top:8px;font-size:15.36px;line-height:15.36px;color:#ffffff;font-weight:400;transform:scaleX(0.852);">akaun.cloud</div>
<div class="t top" style="left:203.60px;top:8px;font-size:15.36px;line-height:15.36px;color:#b3c7ca;font-weight:400;transform:scaleX(0.922);">/#/applet/tnt/wavelet/erp/</div>
<div class="t top" style="left:357.93px;top:8px;font-size:15.36px;line-height:15.36px;color:#b3c7ca;font-weight:400;transform:scaleX(0.866);">purchase-return-applet</div>
<div class="t top" style="left:492.90px;top:8px;font-size:15.36px;line-height:15.36px;color:#b3c7ca;font-weight:400;transform:scaleX(0.874);">/purchase-return</div>
<div class="t top" style="left:93.54px;top:58px;font-size:30.14px;line-height:30.14px;color:#f2f2f2;font-weight:700;transform:scaleX(0.856);-webkit-text-stroke:0.9px #f2f2f2;">akaun</div>
</body></html>
